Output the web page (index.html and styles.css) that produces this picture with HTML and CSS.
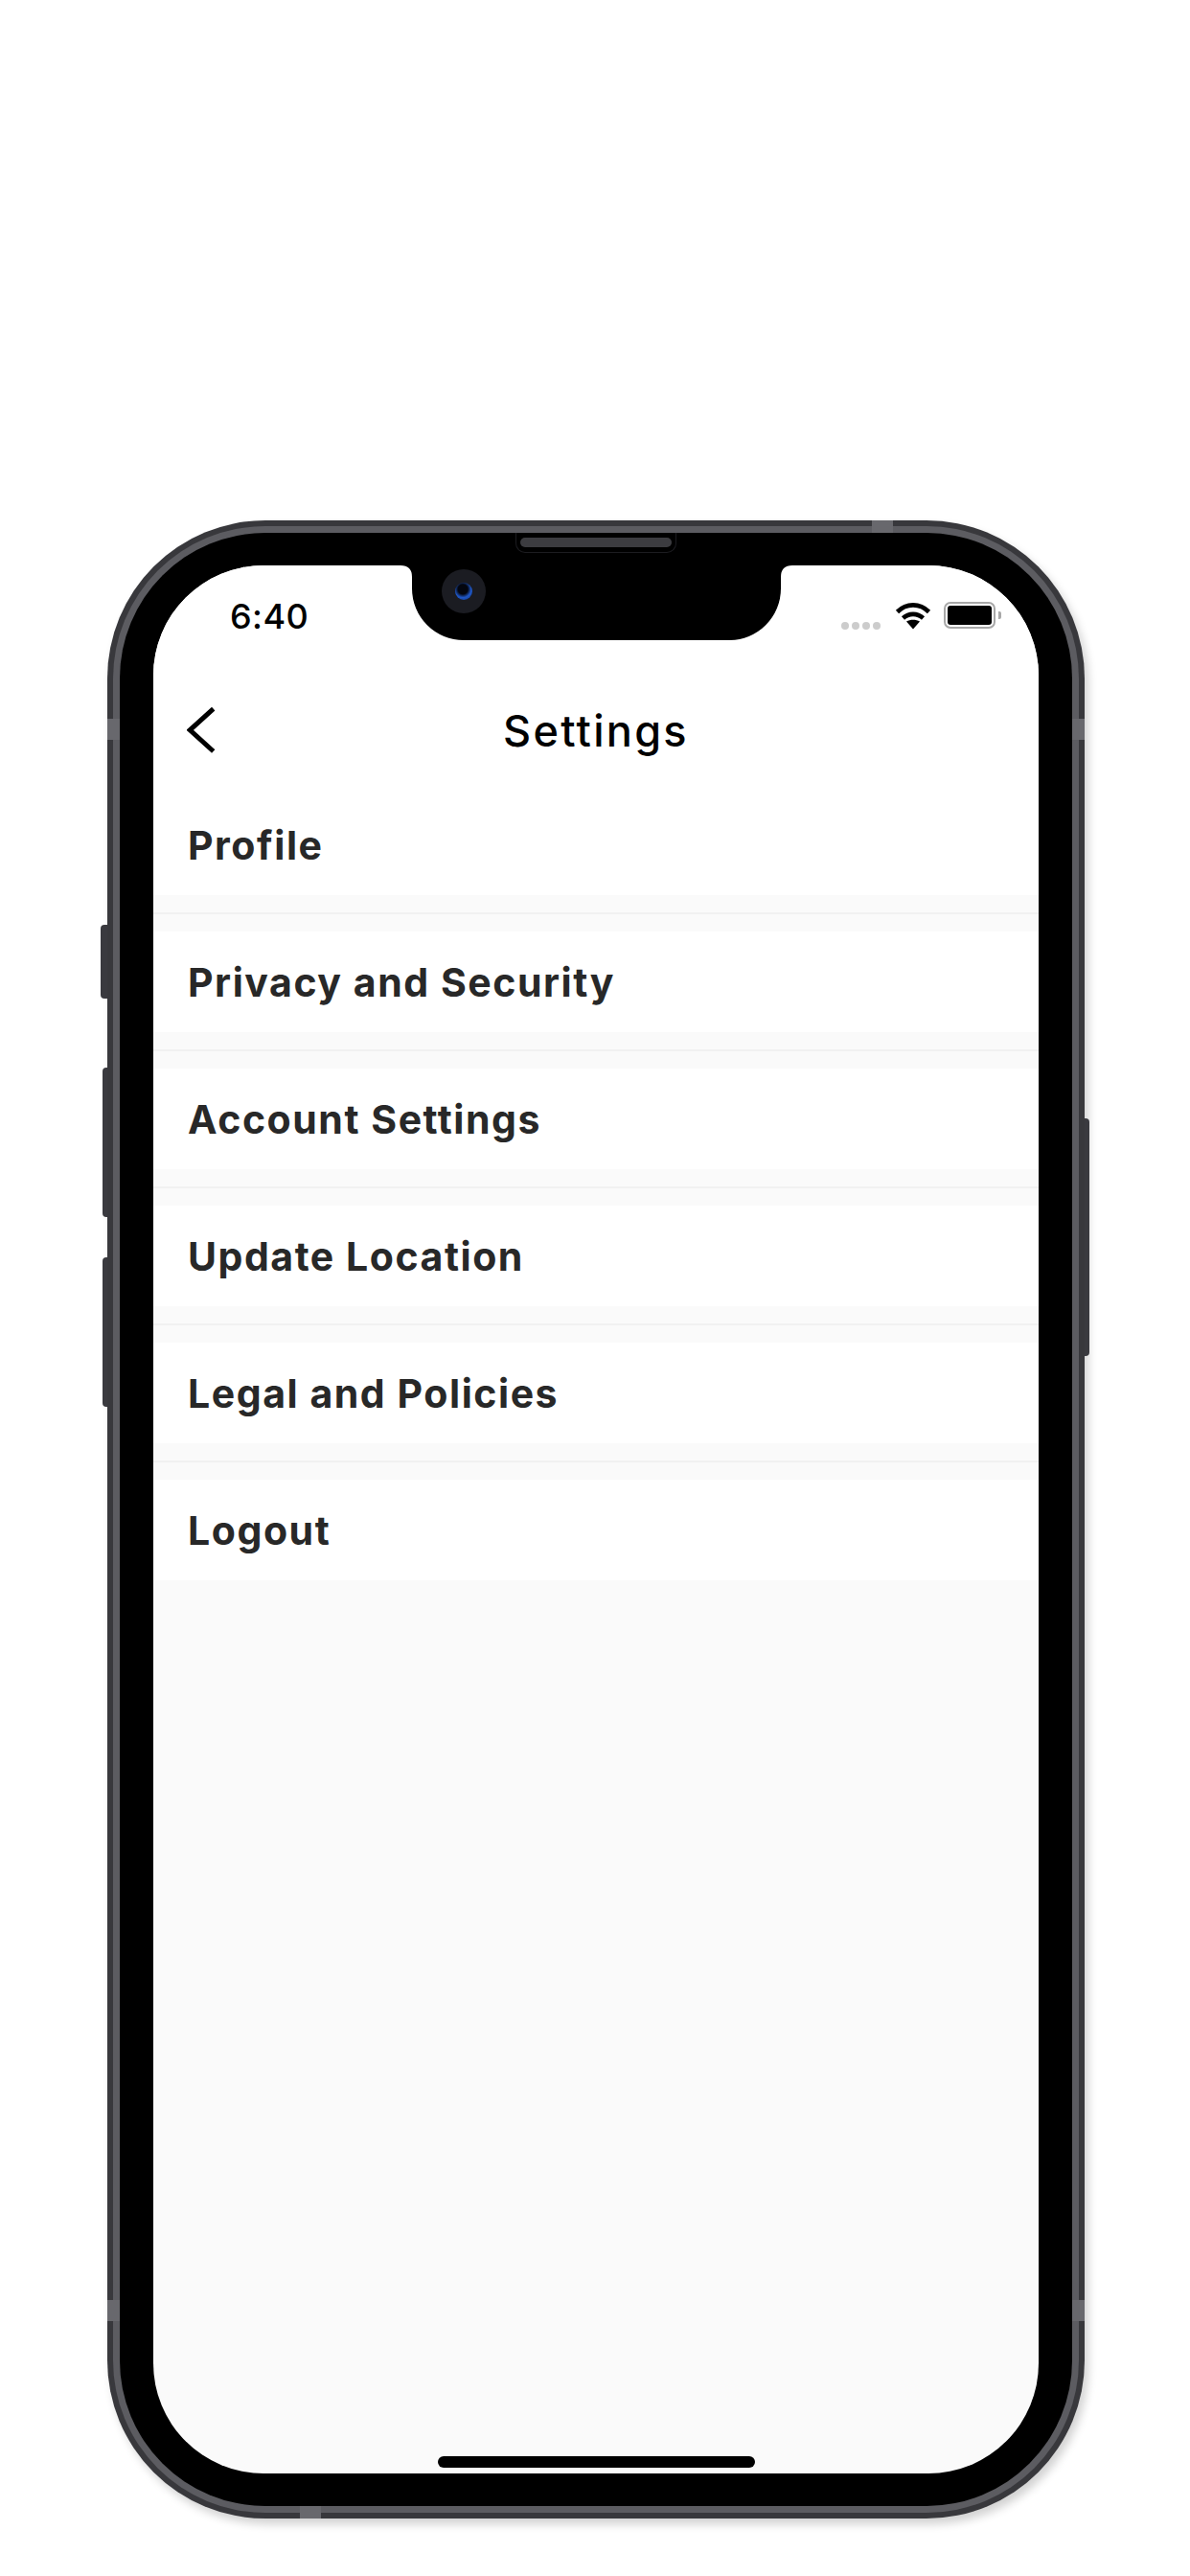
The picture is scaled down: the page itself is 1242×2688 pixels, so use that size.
FILE: index.html
```html
<!DOCTYPE html>
<html lang="en">
<head>
    <meta charset="UTF-8">
    <meta name="viewport" content="width=device-width, initial-scale=1.0">
    <title>Settings</title>
    <link rel="stylesheet" href="styles.css">
</head>
<body>

<div class="phone">
    <span class="btn btn-mute"></span>
    <span class="btn btn-vol-up"></span>
    <span class="btn btn-vol-down"></span>
    <span class="btn btn-power"></span>

    <span class="seam seam-left-top"></span>
    <span class="seam seam-left-bottom"></span>
    <span class="seam seam-right-top"></span>
    <span class="seam seam-right-bottom"></span>
    <span class="seam seam-top"></span>
    <span class="seam seam-bottom"></span>

    <div class="band">
        <div class="bezel">
            <div class="speaker"><span class="speaker-grill"></span></div>

            <div class="screen">
                <div class="notch">
                    <svg class="notch-shape" width="409" height="78" viewBox="0 0 409 78">
                        <path d="M0 0H409Q397 0 397 12V24A54 54 0 0 1 343 78H66A54 54 0 0 1 12 24V12Q12 0 0 0Z" fill="#000"/>
                    </svg>
                    <div class="camera"><span class="lens"></span></div>
                </div>

                <div class="status-bar">
                    <span class="time">6:40</span>
                    <div class="status-icons">
                        <div class="signal">
                            <span></span><span></span><span></span><span></span>
                        </div>
                        <svg class="wifi" width="38" height="29" viewBox="0 0 38 29">
                            <path d="M2.500 10.500C12 1 26 1 35.500 10.500" fill="none" stroke="#000" stroke-width="4.600"/>
                            <path d="M8.500 17C14.500 11.500 23.500 11.500 29.500 17" fill="none" stroke="#000" stroke-width="4.600"/>
                            <path d="M12 20.500C16 18 22 18 26 20.500L19 28.500Z" fill="#000"/>
                        </svg>
                        <div class="battery">
                            <div class="battery-body"><span class="battery-level"></span></div>
                            <span class="battery-nub"></span>
                        </div>
                    </div>
                </div>

                <header class="nav">
                    <svg class="back" width="30" height="50" viewBox="0 0 30 50">
                        <polyline points="27.700,2.700 3.200,24.800 27.700,47" fill="none" stroke="#000" stroke-width="5"/>
                    </svg>
                    <h1 class="nav-title">Settings</h1>
                </header>

                <div class="menu">
                    <a class="menu-item">Profile</a>
                    <div class="divider"></div>
                    <a class="menu-item">Privacy and Security</a>
                    <div class="divider"></div>
                    <a class="menu-item">Account Settings</a>
                    <div class="divider"></div>
                    <a class="menu-item">Update Location</a>
                    <div class="divider"></div>
                    <a class="menu-item">Legal and Policies</a>
                    <div class="divider"></div>
                    <a class="menu-item">Logout</a>
                </div>

                <span class="home-indicator"></span>
            </div>
        </div>
    </div>
</div>

</body>
</html>
```

FILE: styles.css
```css
body {
    margin: 0;
    padding: 543px 0 0 112px;
    height: 2688px;
    box-sizing: border-box;
    background-color: #fff;
    font-family: Inter, "Liberation Sans", sans-serif;
    overflow: hidden;
}
.phone {
    position: relative;
    width: 1020px;
    height: 2085px;
    box-sizing: border-box;
    padding: 6px;
    border-radius: 165px;
    background-color: #38383c;
    box-shadow: 4px 6px 10px rgba(0, 0, 0, 0.18);
}
.band {
    height: 100%;
    box-sizing: border-box;
    padding: 7px;
    border-radius: 159px;
    background-color: #5c5c61;
}
.bezel {
    position: relative;
    height: 100%;
    box-sizing: border-box;
    padding: 34px 35px;
    border-radius: 152px;
    background-color: #000;
}
.btn {
    position: absolute;
    background-color: #3a3a3f;
}
.btn-mute {
    left: -7px;
    top: 422px;
    width: 7px;
    height: 77px;
    border-radius: 4px 0 0 4px;
}
.btn-vol-up {
    left: -5px;
    top: 571px;
    width: 5px;
    height: 156px;
    border-radius: 4px 0 0 4px;
}
.btn-vol-down {
    left: -5px;
    top: 769px;
    width: 5px;
    height: 156px;
    border-radius: 4px 0 0 4px;
}
.btn-power {
    right: -5px;
    top: 624px;
    width: 5px;
    height: 248px;
    border-radius: 0 4px 4px 0;
}
.seam {
    position: absolute;
    background-color: #68686d;
}
.seam-left-top, .seam-left-bottom {
    left: 0;
    width: 13px;
    height: 22px;
}
.seam-right-top, .seam-right-bottom {
    right: 0;
    width: 13px;
    height: 22px;
}
.seam-left-top, .seam-right-top {
    top: 207px;
}
.seam-left-bottom, .seam-right-bottom {
    top: 1857px;
}
.seam-top, .seam-bottom {
    width: 22px;
    height: 13px;
}
.seam-top {
    left: 798px;
    top: 0;
}
.seam-bottom {
    left: 201px;
    bottom: 0;
}
.speaker {
    position: absolute;
    left: 413px;
    top: 0;
    width: 168px;
    height: 21px;
    box-sizing: border-box;
    padding: 5px 4px;
    border: 1px solid #1c1c20;
    border-top: 0;
    border-radius: 0 0 10px 10px;
}
.speaker-grill {
    display: block;
    height: 10px;
    border-radius: 5px;
    background-color: #3c3c40;
}
.screen {
    position: relative;
    display: flex;
    flex-direction: column;
    height: 100%;
    border-radius: 115px;
    background-color: #fafafa;
    overflow: hidden;
}
.notch {
    position: absolute;
    left: 258px;
    top: 0;
    width: 409px;
    height: 78px;
}
.notch-shape {
    display: block;
}
.camera {
    position: absolute;
    left: 43px;
    top: 4px;
    display: flex;
    align-items: center;
    justify-content: center;
    width: 46px;
    height: 46px;
    border-radius: 50%;
    background-color: #1b1c22;
}
.lens {
    width: 18px;
    height: 18px;
    border-radius: 50%;
    background: radial-gradient(circle at 45% 38%, #03060f 34%, #1f56c4 58%, #12357f 100%);
}
.status-bar {
    display: flex;
    justify-content: space-between;
    height: 105px;
    box-sizing: border-box;
    padding: 38px 39px 0 80px;
    background-color: #fff;
}
.time {
    font-size: 36px;
    font-weight: 550;
    letter-spacing: 0.4px;
    line-height: 31px;
    color: #000;
}
.status-icons {
    display: flex;
    align-items: flex-start;
    height: 31px;
}
.signal {
    display: flex;
    gap: 3px;
    margin: 21px 15px 0 0;
}
.signal span {
    width: 8px;
    height: 8px;
    border-radius: 50%;
    background-color: #ccc;
}
.wifi {
    display: block;
    margin-right: 13px;
}
.battery {
    display: flex;
    align-items: center;
}
.battery-body {
    width: 54px;
    height: 28px;
    box-sizing: border-box;
    padding: 2px;
    border: 2px solid #a8a8a8;
    border-radius: 7px;
}
.battery-level {
    display: block;
    height: 100%;
    border-radius: 3px;
    background-color: #000;
}
.battery-nub {
    width: 3px;
    height: 8px;
    margin-left: 3px;
    border-radius: 0 2px 2px 0;
    background-color: #a8a8a8;
}
.nav {
    display: grid;
    grid-template-columns: 1fr auto 1fr;
    align-items: center;
    height: 134px;
    padding-left: 35px;
    padding-right: 35px;
    background-color: #fff;
}
.nav-title {
    margin: 0;
    font-size: 45px;
    font-weight: 450;
    letter-spacing: 2.300px;
    color: #000;
}
.back {
    display: block;
}
.menu {
    display: flex;
    flex-direction: column;
}
.menu-item {
    display: flex;
    align-items: center;
    height: 105px;
    padding-left: 36px;
    background-color: #fff;
    font-size: 41px;
    font-weight: 650;
    letter-spacing: 1.550px;
    color: #282828;
}
.divider {
    display: flex;
    align-items: center;
    height: 38px;
}
.divider::before {
    content: "";
    flex: 1;
    height: 2px;
    background-color: #f1f1f1;
}
.home-indicator {
    position: absolute;
    left: 297px;
    bottom: 6px;
    width: 331px;
    height: 12px;
    border-radius: 6px;
    background-color: #000;
}
```
